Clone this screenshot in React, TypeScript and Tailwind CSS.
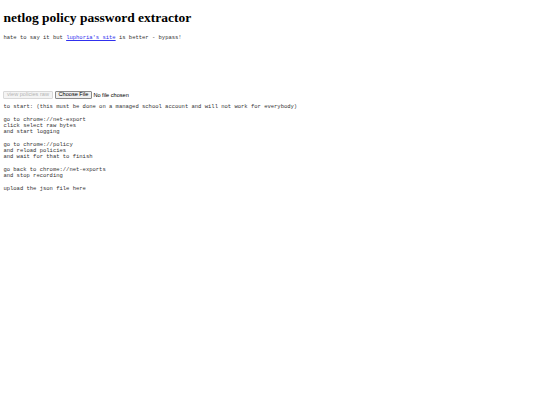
export default function App() {
  return (
    <div className="min-h-[405px] bg-white p-[3.4px] text-black">
      <h1 className="mt-[8px] mb-[9px] text-[13.5px] leading-[14.5px] font-bold [font-family:'Liberation_Serif',serif]">
        netlog policy password extractor
      </h1>
      <p className="my-[5.6px] text-[5.5px] leading-[6.3px] text-[#333] [font-family:'Liberation_Mono',monospace]">
        hate to say it but{" "}
        <a href="#" className="text-[#3030ee] underline">
          luphoria&apos;s site
        </a>{" "}
        is better - bypass!
      </p>
      <div className="h-[44px]" />
      <div className="flex items-center gap-[2.4px] [font-family:'Liberation_Sans',sans-serif] text-[5.6px]">
        <button
          disabled
          className="h-[7.4px] rounded-[1px] border-[0.5px] border-[#d8d8d8] bg-[#f4f4f4] px-[2.6px] leading-none text-[#b4b4b4]"
        >
          view policies raw
        </button>
        <label className="flex items-center gap-[1.4px]">
          <span className="flex h-[7.4px] items-center rounded-[1px] border-[0.5px] border-[#8a8a8a] bg-[#efefef] px-[2.6px] leading-none text-black">
            Choose File
          </span>
          <span>No file chosen</span>
        </label>
      </div>
      <pre className="mt-[5.2px] text-[5.5px] leading-[6.25px] text-[#333] [font-family:'Liberation_Mono',monospace]">
        {`to start: (this must be done on a managed school account and will not work for everybody)

go to chrome://net-export
click select raw bytes
and start logging

go to chrome://policy
and reload policies
and wait for that to finish

go back to chrome://net-exports
and stop recording

upload the json file here`}
      </pre>
    </div>
  );
}
